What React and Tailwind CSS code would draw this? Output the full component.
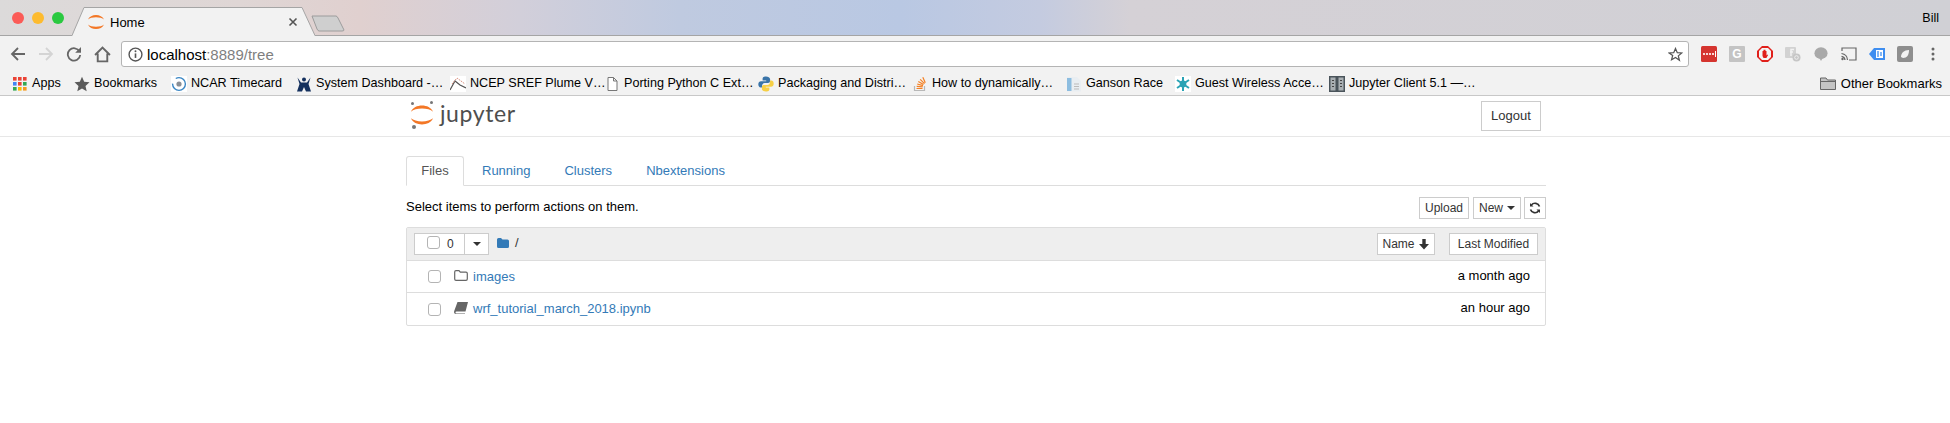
import React from "react";

const Crescents = ({ className }) => (
  <svg viewBox="0 0 16 16" className={className}>
    <path d="M0 5.600C2.400 -.4 13.600 -.4 16 5.600C13 2.600 3 2.600 0 5.600Z" fill="#f37726" />
    <path d="M0 10.400C2.400 16.400 13.600 16.400 16 10.400C13 13.400 3 13.400 0 10.400Z" fill="#f37726" />
  </svg>
);

const Dot = ({ c }) => <span className={`w-3 h-3 rounded-full ${c}`} />;

const AppsIcon = () => (
  <svg viewBox="0 0 14 14" className="w-[14px] h-[14px]">
    {[
      ["#ea4335", "#ea4335", "#ea4335"],
      ["#4285f4", "#ea4335", "#34a853"],
      ["#34a853", "#fbbc05", "#f59a23"],
    ].map((r, y) => r.map((f, x) => <rect key={x + "-" + y} x={x * 5} y={y * 5} width="3.600" height="3.600" fill={f} />))}
  </svg>
);

const icons = {
  apps: <AppsIcon />,
  star: (
    <svg viewBox="0 0 16 16" className="w-4 h-4"><path d="M8 .8l2.200 5 5.300.5-4 3.600 1.200 5.300L8 12.400l-4.700 2.800 1.200-5.300-4-3.600 5.300-.5z" fill="#5a5a5a" /></svg>
  ),
  ncar: (
    <svg viewBox="0 0 16 16" className="w-4 h-4">
      <rect width="16" height="16" fill="#fff" />
      <circle cx="8" cy="8" r="6.400" fill="none" stroke="#3a86c4" strokeWidth="1.400" strokeDasharray="20 6" />
      <circle cx="8" cy="8" r="2.600" fill="#8a8f96" />
    </svg>
  ),
  sys: (
    <svg viewBox="0 0 16 16" className="w-4 h-4">
      <circle cx="8" cy="3.400" r="2" fill="#14305e" />
      <path d="M1.500 1.500L5 6.500h6L14.500 1.500 12.500 8 15 15.500H10L8 11 6 15.500H1L3.500 8Z" fill="#14305e" />
    </svg>
  ),
  ncep: (
    <svg viewBox="0 0 16 16" className="w-4 h-4">
      <rect width="16" height="16" fill="#fff" />
      <path d="M0 14L5 5l5 4 6 3" fill="none" stroke="#555" strokeWidth="1.200" />
      <path d="M2 8L7 2l8 6" fill="none" stroke="#d98b7b" strokeWidth="1" strokeDasharray="1.500 1" />
    </svg>
  ),
  doc: (
    <svg viewBox="0 0 16 16" className="w-4 h-4">
      <path d="M4 1.500h5.500L13 5v9.500H4z M9.500 1.500V5H13" fill="#fff" stroke="#777" strokeWidth="1" />
    </svg>
  ),
  py: (
    <svg viewBox="0 0 16 16" className="w-4 h-4">
      <path d="M8 .5C5 .5 4.600 1.700 4.600 3v1.600H8.200v.7H3C1.500 5.300.3 6.300.3 8.300s1 3.200 2.400 3.200h1.400V9.600c0-1.300 1.100-2.500 2.600-2.500h3.400c1.100 0 2-.9 2-2V3C11.700 1.500 10.300.5 8 .5Z" fill="#3a74a8" />
      <path d="M8 15.500c3 0 3.400-1.200 3.400-2.500v-1.600H7.800v-.7H13c1.500 0 2.700-1 2.700-3s-1-3.200-2.400-3.200h-1.400v1.900c0 1.300-1.100 2.500-2.600 2.500H5.900c-1.100 0-2 .9-2 2V13c0 1.500 1.800 2.500 4.100 2.500Z" fill="#f6cf45" />
    </svg>
  ),
  so: (
    <svg viewBox="0 0 16 16" className="w-4 h-4">
      <path d="M2.500 10v4.500h10V10" fill="none" stroke="#b8b8b8" strokeWidth="1.200" />
      <path d="M4.500 12.500h6M4.700 10.300l6 .6M5.200 8l5.800 1.600M6.300 5.600l5.200 3M8.200 3.300l4.300 4.300M10.800 1.300l2.500 5.400" fill="none" stroke="#f48024" strokeWidth="1.200" />
    </svg>
  ),
  ganson: (
    <svg viewBox="0 0 16 16" className="w-4 h-4">
      <path d="M1 1h10l4 4v10.500H1z" fill="#e9eef2" />
      <rect x="1" y="2" width="4.500" height="13" fill="#8dbde0" />
      <path d="M8 8h5M8 10.500h5M8 13h5" stroke="#bbb" strokeWidth="1" />
    </svg>
  ),
  guest: (
    <svg viewBox="0 0 16 16" className="w-4 h-4">
      <rect width="16" height="16" fill="#fff" />
      <path d="M8 1v14M2 4l12 8M14 4L2 12" stroke="#2aa3b5" strokeWidth="2" />
      <circle cx="8" cy="8" r="3.400" fill="#2aa3b5" />
    </svg>
  ),
  jc: (
    <svg viewBox="0 0 16 16" className="w-4 h-4">
      <rect width="16" height="16" fill="#4a545b" />
      <rect x="1.500" y="1.500" width="5" height="13" fill="#a9afb3" />
      <rect x="9.500" y="1.500" width="5" height="13" fill="#a9afb3" />
      <path d="M3 4.500h2M3 7.500h2M3 10.500h2M11 4.500h2M11 7.500h2M11 10.500h2" stroke="#444" strokeWidth="1.200" />
    </svg>
  ),
};

const bookmarks = [
  ["apps", "Apps", "w-[62px]"],
  ["star", "Bookmarks", "w-[97px]"],
  ["ncar", "NCAR Timecard", "w-[125px]"],
  ["sys", "System Dashboard -…", "w-[154px]"],
  ["ncep", "NCEP SREF Plume V…", "w-[154px]"],
  ["doc", "Porting Python C Ext…", "w-[154px]"],
  ["py", "Packaging and Distri…", "w-[154px]"],
  ["so", "How to dynamically…", "w-[154px]"],
  ["ganson", "Ganson Race", "w-[109px]"],
  ["guest", "Guest Wireless Acce…", "w-[154px]"],
  ["jc", "Jupyter Client 5.1 —…", "w-[154px]"],
];

const Ext = ({ children }) => <div className="w-7 h-7 flex items-center justify-center shrink-0">{children}</div>;

const Btn = ({ className = "", children }) => (
  <div className={`border border-[#ccc] bg-white text-[#333] text-[12px] flex items-center justify-center ${className}`}>{children}</div>
);

const Check = ({ className = "" }) => <span className={`block w-[13px] h-[13px] rounded-[3px] border border-[#b4b4b4] bg-white shrink-0 ${className}`} />;

export default function App() {
  return (
    <div className="w-[1950px] h-[423px] overflow-hidden bg-white font-['Liberation_Sans',Arial,sans-serif] text-black">
      {/* tab strip */}
      <div className="h-[36px] border-b border-[#a5a5a5] flex bg-[linear-gradient(90deg,#dcdada_0px,#dfd6d5_240px,#e0d0cf_360px,#d2cfda_520px,#bfcae0_680px,#b9c8e3_900px,#c4cbe0_1040px,#d5d1d6_1130px,#d0d0d5_1950px)]">
        <div className="flex items-center gap-2 pl-3 w-[72px] h-[35px] pb-0 shrink-0">
          <Dot c="bg-[#fb5b57]" />
          <Dot c="bg-[#fdbb2f]" />
          <Dot c="bg-[#2ac940]" />
        </div>
        <div className="relative w-[243px] h-[36px] shrink-0 flex items-start">
          <svg viewBox="0 0 243 36" className="absolute inset-0 w-full h-full">
            <path d="M0 36 L12 7.500 H230 L243 36Z" fill="#f2f2f2" />
            <path d="M0 35.500 L12 7.500 H230 L243 35.500" fill="none" stroke="#a5a5a5" strokeWidth="1" />
          </svg>
          <div className="relative flex items-center h-[16px] mt-[14px] pl-[16px]">
            <Crescents className="w-4 h-4" />
            <span className="ml-[6px] text-[13px] leading-none">Home</span>
          </div>
          <svg viewBox="0 0 10 10" className="absolute left-[216px] top-[17px] w-[10px] h-[10px]">
            <path d="M1.500 1.500l7 7M8.500 1.500l-7 7" stroke="#555" strokeWidth="1.600" />
          </svg>
        </div>
        <svg viewBox="0 0 34 17" className="w-[34px] h-[17px] mt-[15px] -ml-[4px]">
          <path d="M1 1H25Q26 1 27 3L33 15Q33 16 31 16H8Q7 16 6 14Z" fill="#cfcfcf" stroke="#9c9c9c" />
        </svg>
        <div className="ml-auto pr-[11px] pt-[11px] text-[12.500px] leading-[15px]">Bill</div>
      </div>

      <div className="bg-[#f2f2f2] h-[60px] border-b border-[#c8c8c8]">
        {/* toolbar */}
        <div className="h-[36px] pt-[5px] pl-[4px] flex items-start">
          <div className="w-7 h-[26px] flex items-center justify-center">
            <svg viewBox="0 0 16 16" className="w-4 h-4"><path d="M15 8H2M8 2L2 8l6 6" fill="none" stroke="#666" strokeWidth="1.800" /></svg>
          </div>
          <div className="w-7 h-[26px] flex items-center justify-center">
            <svg viewBox="0 0 16 16" className="w-4 h-4"><path d="M1 8h13M8 2l6 6-6 6" fill="none" stroke="#d4d4d4" strokeWidth="1.800" /></svg>
          </div>
          <div className="w-7 h-[26px] flex items-center justify-center">
            <svg viewBox="0 0 16 16" className="w-4 h-4"><path d="M13.500 5.500A6.200 6.200 0 1 0 14.200 9" fill="none" stroke="#666" strokeWidth="1.800" /><path d="M15 1v5.800H9.200z" fill="#666" /></svg>
          </div>
          <div className="w-7 h-[26px] flex items-center justify-center">
            <svg viewBox="0 0 16 16" className="w-[17px] h-[17px]"><path d="M1 8.500L8 1.500l7 7M3.500 7v7.500h9V7" fill="none" stroke="#666" strokeWidth="1.800" /></svg>
          </div>
          <div className="ml-[5px] w-[1568px] h-[26px] bg-white border border-[#b4b4b4] rounded-[3px] flex items-center pl-[6px] pr-[3px] text-[15px]">
            <svg viewBox="0 0 14 14" className="w-[15px] h-[15px]">
              <circle cx="7" cy="7" r="6" fill="none" stroke="#555" strokeWidth="1.300" />
              <path d="M7 6v4.200" stroke="#555" strokeWidth="1.500" />
              <circle cx="7" cy="3.900" r=".9" fill="#555" />
            </svg>
            <span className="ml-[4px] leading-none">localhost<span className="text-[#7f7f7f]">:8889/tree</span></span>
            <svg viewBox="0 0 16 16" className="w-[15px] h-[15px] ml-auto mr-[2px]">
              <path d="M8 1.500l1.900 4.500 4.800.4-3.700 3.100 1.200 4.700L8 11.200l-4.200 2.500L5 9 1.300 6.400 6.100 6z" fill="none" stroke="#555" strokeWidth="1.300" />
            </svg>
          </div>
          <div className="ml-[6px] flex -mt-[1px]">
            <Ext>
              <svg viewBox="0 0 16 16" className="w-4 h-4">
                <rect width="16" height="16" rx="1.500" fill="#d5342f" />
                <circle cx="3" cy="8" r="1.100" fill="#fff" /><circle cx="6" cy="8" r="1.100" fill="#fff" /><circle cx="9" cy="8" r="1.100" fill="#fff" /><circle cx="12" cy="8" r="1.100" fill="#fff" />
                <rect x="14" y="5" width="1" height="6" fill="#fff" />
              </svg>
            </Ext>
            <Ext>
              <div className="w-4 h-4 bg-[#c4c4c4] rounded-[1px] text-white text-[12px] font-bold leading-4 text-center">G</div>
            </Ext>
            <Ext>
              <svg viewBox="0 0 16 16" className="w-4 h-4">
                <path d="M5 0h6l5 5v6l-5 5H5l-5-5V5z" fill="#e0201b" />
                <path d="M5 2h6l3 3v6l-3 3H5l-3-3V5z" fill="#f4f4f4" />
                <path d="M5.500 8.500V5h1v3V3.800h1V8 3.800h1V8 5h1v4.500l1-1 .6.500-1.700 3H6.500L5.500 10z" fill="#e0201b" />
              </svg>
            </Ext>
            <Ext>
              <svg viewBox="0 0 16 16" className="w-4 h-4">
                <rect x="0" y="1" width="11" height="11" rx="1" fill="#d2d2d2" />
                <path d="M6 10V3.500h3M5 6h3" stroke="#f2f2f2" strokeWidth="1.500" fill="none" />
                <circle cx="11.500" cy="11.500" r="4" fill="#c6c6c6" />
                <circle cx="11.500" cy="11.500" r="1.800" fill="none" stroke="#efefef" />
              </svg>
            </Ext>
            <Ext>
              <svg viewBox="0 0 16 16" className="w-[14px] h-4">
                <ellipse cx="8" cy="7" rx="7.500" ry="6.800" fill="#a9a9a9" />
                <path d="M6 12.500L8 16l2-3.500z" fill="#a9a9a9" />
              </svg>
            </Ext>
            <Ext>
              <svg viewBox="0 0 16 14" className="w-4 h-[14px]">
                <path d="M1 4V1h14v12H8" fill="none" stroke="#666" strokeWidth="1.200" />
                <path d="M.5 6.500A7 7 0 0 1 6.500 13M.5 9.300A4.200 4.200 0 0 1 4 13" fill="none" stroke="#666" strokeWidth="1.200" />
                <circle cx="1.500" cy="12" r="1.200" fill="#666" />
              </svg>
            </Ext>
            <Ext>
              <svg viewBox="0 0 16 12" className="w-4 h-3">
                <path d="M5 0h11v12H5L0 6z" fill="#3f8ef0" />
                <rect x="7" y="2" width="7" height="8" fill="#fff" />
                <path d="M5.500 4v.1M5.500 8v.1M9 3v6M12 4v4" stroke="#3f8ef0" strokeWidth="1.300" />
              </svg>
            </Ext>
            <Ext>
              <svg viewBox="0 0 16 16" className="w-4 h-4">
                <rect width="16" height="16" rx="2" fill="#8e8e8e" />
                <path d="M4 11C4 7 7 4 12 4c0 5-2 8-6 8z" fill="#f2f2f2" />
              </svg>
            </Ext>
            <Ext>
              <svg viewBox="0 0 4 14" className="w-1 h-[14px]">
                <circle cx="2" cy="2" r="1.500" fill="#666" /><circle cx="2" cy="7" r="1.500" fill="#666" /><circle cx="2" cy="12" r="1.500" fill="#666" />
              </svg>
            </Ext>
          </div>
        </div>
        {/* bookmarks */}
        <div className="h-[23px] pl-[12px] pr-[8px] flex items-center text-[12.600px] leading-none">
          {bookmarks.map(([icon, text, w]) => (
            <div key={text} className={`flex items-center gap-1 shrink-0 ${w}`}>
              <span className="w-4 h-4 flex items-center justify-center shrink-0">{icons[icon]}</span>
              <span className="whitespace-nowrap">{text}</span>
            </div>
          ))}
          <div className="ml-auto flex items-center gap-[5px] text-[13px]">
            <svg viewBox="0 0 16 13" className="w-4 h-[13px]">
              <path d="M.5 12.500V1h5.500l1.500 2h8v9.500z" fill="#c4c4c4" stroke="#666" />
              <path d="M.5 4.500h15" stroke="#666" />
            </svg>
            <span>Other Bookmarks</span>
          </div>
        </div>
      </div>

      {/* jupyter header */}
      <div className="h-[41px] border-b border-[#e7e7e7] flex items-start pl-[411px] pr-[409px]">
        <div className="relative w-[22px] h-[26px] mt-[6px] shrink-0">
          <Crescents className="absolute left-0 top-[2px] w-[22px] h-[22px]" />
          <span className="absolute left-0 top-[0px] w-[3px] h-[3px] rounded-full bg-[#767677]" />
          <span className="absolute right-0 top-[-1px] w-[3px] h-[3px] rounded-full bg-[#767677]" />
          <span className="absolute left-[1px] bottom-[-1px] w-[4px] h-[4px] rounded-full bg-[#767677]" />
        </div>
        <div className="ml-[7px] mt-[2px] font-['Lato',sans-serif] text-[#4e4e4e] text-[23px] leading-[30px] tracking-[0.6px]">jupyter</div>
        <Btn className="ml-auto mt-[5px] w-[60px] h-[30px] text-[13px]">Logout</Btn>
      </div>

      <div className="ml-[406px] w-[1140px] text-[13px]">
        {/* tabs */}
        <div className="h-[49px] pt-[19px] flex items-end border-b border-[#ddd] text-[#337ab7]">
          <div className="w-[58px] h-[30px] -mb-px bg-white border border-[#ddd] border-b-white rounded-t-[3px] text-[#555] flex items-center justify-center">Files</div>
          <div className="ml-[18px] h-[29px] flex items-center">Running</div>
          <div className="ml-[34px] h-[29px] flex items-center">Clusters</div>
          <div className="ml-[34px] h-[29px] flex items-center">Nbextensions</div>
        </div>

        {/* actions */}
        <div className="h-[41px] pt-[11px] flex items-start">
          <span className="leading-[18px] mt-[1px]">Select items to perform actions on them.</span>
          <div className="ml-auto flex">
            <Btn className="w-[50px] h-[22px]">Upload</Btn>
            <Btn className="ml-[4px] w-[48px] h-[22px] gap-1">New<svg viewBox="0 0 8 4" className="w-2 h-1"><path d="M0 0h8L4 4z" fill="#333" /></svg></Btn>
            <Btn className="ml-[3px] w-[22px] h-[22px]">
              <svg viewBox="0 0 12 12" className="w-3 h-3">
                <path d="M10.500 4.500A4.700 4.700 0 0 0 2.400 3M1.500 7.500a4.700 4.700 0 0 0 8.100 1.500" fill="none" stroke="#333" strokeWidth="1.700" />
                <path d="M1 1v3.500h3.500zM11 11V7.500H7.500z" fill="#333" />
              </svg>
            </Btn>
          </div>
        </div>

        {/* list */}
        <div className="h-[99px] border border-[#ddd] rounded-[2px]">
          <div className="h-[33px] bg-[#eee] border-b border-[#ddd] flex items-center pl-[7px] pr-[7px]">
            <div className="flex h-[22px] w-[75px] border border-[#ccc] bg-white -mt-[1px]">
              <div className="w-[50px] border-r border-[#ccc] flex items-center pl-[12px] gap-[7px]">
                <Check className="-mt-[2px]" />
                <span className="text-[#333] text-[12px]">0</span>
              </div>
              <div className="flex-1 flex items-center justify-center">
                <svg viewBox="0 0 8 4" className="w-2 h-1"><path d="M0 0h8L4 4z" fill="#333" /></svg>
              </div>
            </div>
            <svg viewBox="0 0 12 10" className="ml-[8px] -mt-[3px] w-3 h-[10px]">
              <path d="M0 1.500Q0 0 1.500 0h2.500l1.500 1.500h5Q12 1.500 12 3v5.500Q12 10 10.500 10h-9Q0 10 0 8.500z" fill="#337ab7" />
            </svg>
            <span className="ml-[6px] -mt-[3px] text-[#333]">/</span>
            <Btn className="ml-auto w-[58px] h-[22px] gap-[3px] -mt-[1px]">
              Name
              <svg viewBox="0 0 12 12" className="w-3 h-3"><path d="M4.300 1h3.400v5H11L6 11.500 1 6h3.300z" fill="#333" /></svg>
            </Btn>
            <Btn className="ml-[14px] w-[89px] h-[22px] -mt-[1px]">Last Modified</Btn>
          </div>
          <div className="h-[32px] border-b border-[#ddd] flex items-center pl-[21px] pr-[15px]">
            <Check />
            <svg viewBox="0 0 14 11" className="ml-[13px] -mt-[2px] w-[14px] h-[11px]">
              <path d="M.7 2Q.7.7 2 .7h3l1.300 1.500H12Q13.300 2.200 13.300 3.500v5.500Q13.300 10.300 12 10.300H2Q.7 10.300.7 9z" fill="none" stroke="#666" strokeWidth="1.200" />
            </svg>
            <span className="ml-[5px] text-[#337ab7]">images</span>
            <span className="ml-auto -mt-[2px]">a month ago</span>
          </div>
          <div className="h-[32px] flex items-center pl-[21px] pr-[15px]">
            <Check />
            <svg viewBox="0 0 14 12" className="ml-[13px] -mt-[2px] w-[14px] h-[12px]">
              <path d="M3.500 0H14L11.500 9.500H2.500Q1.500 9.500 1.500 10.500T2.500 11.500H11V12H2Q0 12 0 10.300Q0 9.800 .3 8.700z" fill="#666" />
            </svg>
            <span className="ml-[5px] text-[#337ab7]">wrf_tutorial_march_2018.ipynb</span>
            <span className="ml-auto -mt-[2px]">an hour ago</span>
          </div>
        </div>
      </div>
    </div>
  );
}
